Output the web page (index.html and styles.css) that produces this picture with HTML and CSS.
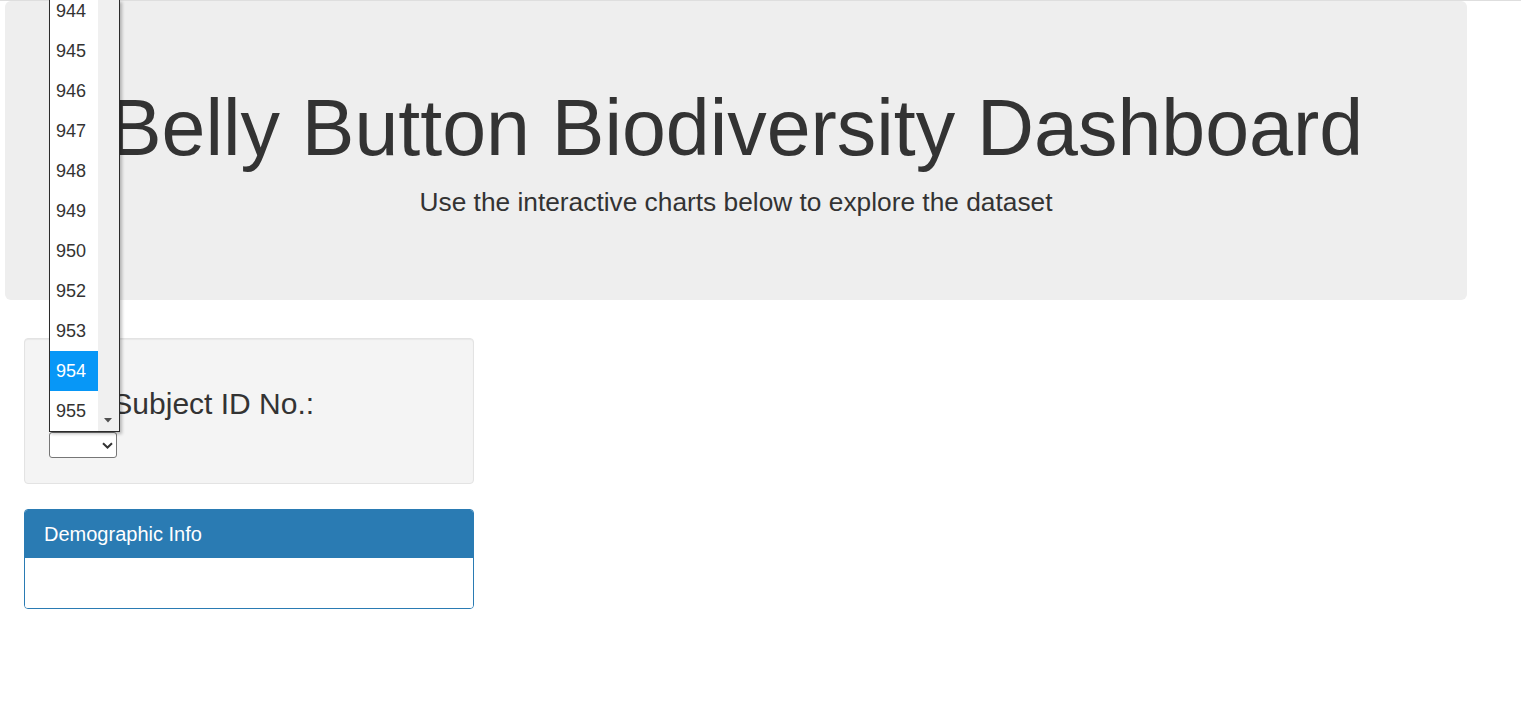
FILE: index.html
```html
<!DOCTYPE html>
<html lang="en">
<head>
<meta charset="utf-8">
<title>Belly Button Biodiversity</title>
<link rel="stylesheet" href="styles.css">
</head>
<body>
<div class="topline"></div>
<div class="page">
  <div class="jumbotron">
    <h1 class="title">Belly Button Biodiversity Dashboard</h1>
    <p class="lead">Use the interactive charts below to explore the dataset</p>
  </div>
  <div class="sidebar">
    <div class="well">
      <h2 class="well-title">Test Subject ID No.:</h2>
      <div class="select-wrap">
        <select class="sel" id="selDataset"></select>
        <svg class="chev" width="11" height="7" viewBox="0 0 11 7"><path d="M1 1.2 L5.5 5.5 L10 1.2" fill="none" stroke="#333" stroke-width="2"/></svg>
      </div>
    </div>
    <div class="panel">
      <div class="panel-heading">Demographic Info</div>
      <div class="panel-body"></div>
    </div>
  </div>
</div>
<div class="dropdown">
  <div class="options">
    <div class="opt">944</div>
    <div class="opt">945</div>
    <div class="opt">946</div>
    <div class="opt">947</div>
    <div class="opt">948</div>
    <div class="opt">949</div>
    <div class="opt">950</div>
    <div class="opt">952</div>
    <div class="opt">953</div>
    <div class="opt active">954</div>
    <div class="opt">955</div>
  </div>
  <div class="scrollbar">
    <svg class="arrow" width="8" height="5" viewBox="0 0 8 5"><path d="M0 0 L8 0 L4 4.5 Z" fill="#505050"/></svg>
  </div>
</div>
</body>
</html>
```

FILE: styles.css
```css
* { box-sizing: border-box; }
html, body { margin: 0; padding: 0; background: #fff; }
body {
  font-family: "Liberation Sans", Arial, Helvetica, sans-serif;
  color: #333;
  font-size: 14px;
  line-height: 1.42857;
}
.topline { height: 1px; background: #dedede; }
.page { padding: 0 54px 0 5px; }
.jumbotron {
  background: #eee;
  border-radius: 6px;
  padding: 84px 0 80px;
  text-align: center;
}
.title {
  margin: 0;
  font-size: 78.9px;
  font-weight: 400;
  line-height: 86px;
}
.lead {
  margin: 13px 0 0;
  font-size: 26.3px;
  line-height: 36px;
}
.sidebar { width: 450px; margin-left: 19px; margin-top: 38px; }
.well {
  background: #f4f4f4;
  border: 1px solid #e3e3e3;
  border-radius: 4px;
  padding: 24px 24px 25px;
  box-shadow: inset 0 1px 1px rgba(0,0,0,.05);
}
.well-title {
  margin: 24px 0 12px;
  font-size: 30px;
  font-weight: 400;
  line-height: 33px;
}
.select-wrap { position: relative; width: 68px; height: 26px; }
.sel {
  -webkit-appearance: none;
  appearance: none;
  display: block;
  width: 68px;
  height: 26px;
  border: 1px solid #767676;
  border-radius: 3px;
  background: #fff;
  margin: 0;
}
.chev { position: absolute; left: 53px; top: 10px; }
.panel {
  margin-top: 25px;
  border: 1px solid #2a7bb3;
  border-radius: 4px;
  overflow: hidden;
}
.panel-heading {
  background: #2a7bb3;
  color: #fff;
  font-size: 20px;
  line-height: 22px;
  padding: 13px 19px 13px;
}
.panel-body { height: 50px; background: #fff; }

.dropdown {
  position: absolute;
  left: 49px;
  top: 0;
  width: 71px;
  height: 432px;
  border-left: 1px solid #2b2b2b;
  border-right: 1px solid #2b2b2b;
  border-bottom: 1px solid #2b2b2b;
  background: #fff;
  display: flex;
  overflow: hidden;
  box-shadow: 2px 2px 3px rgba(0,0,0,.25);
}
.options { width: 48px; margin-top: -9px; }
.opt {
  height: 40px;
  line-height: 40px;
  padding-left: 6px;
  font-size: 18px;
  color: #333;
  background: #fff;
}
.opt.active { background: #0797f7; color: #fff; }
.scrollbar {
  flex: 1;
  background: #f0f0f0;
  position: relative;
}
.arrow { position: absolute; left: 6px; bottom: 8px; }
```
